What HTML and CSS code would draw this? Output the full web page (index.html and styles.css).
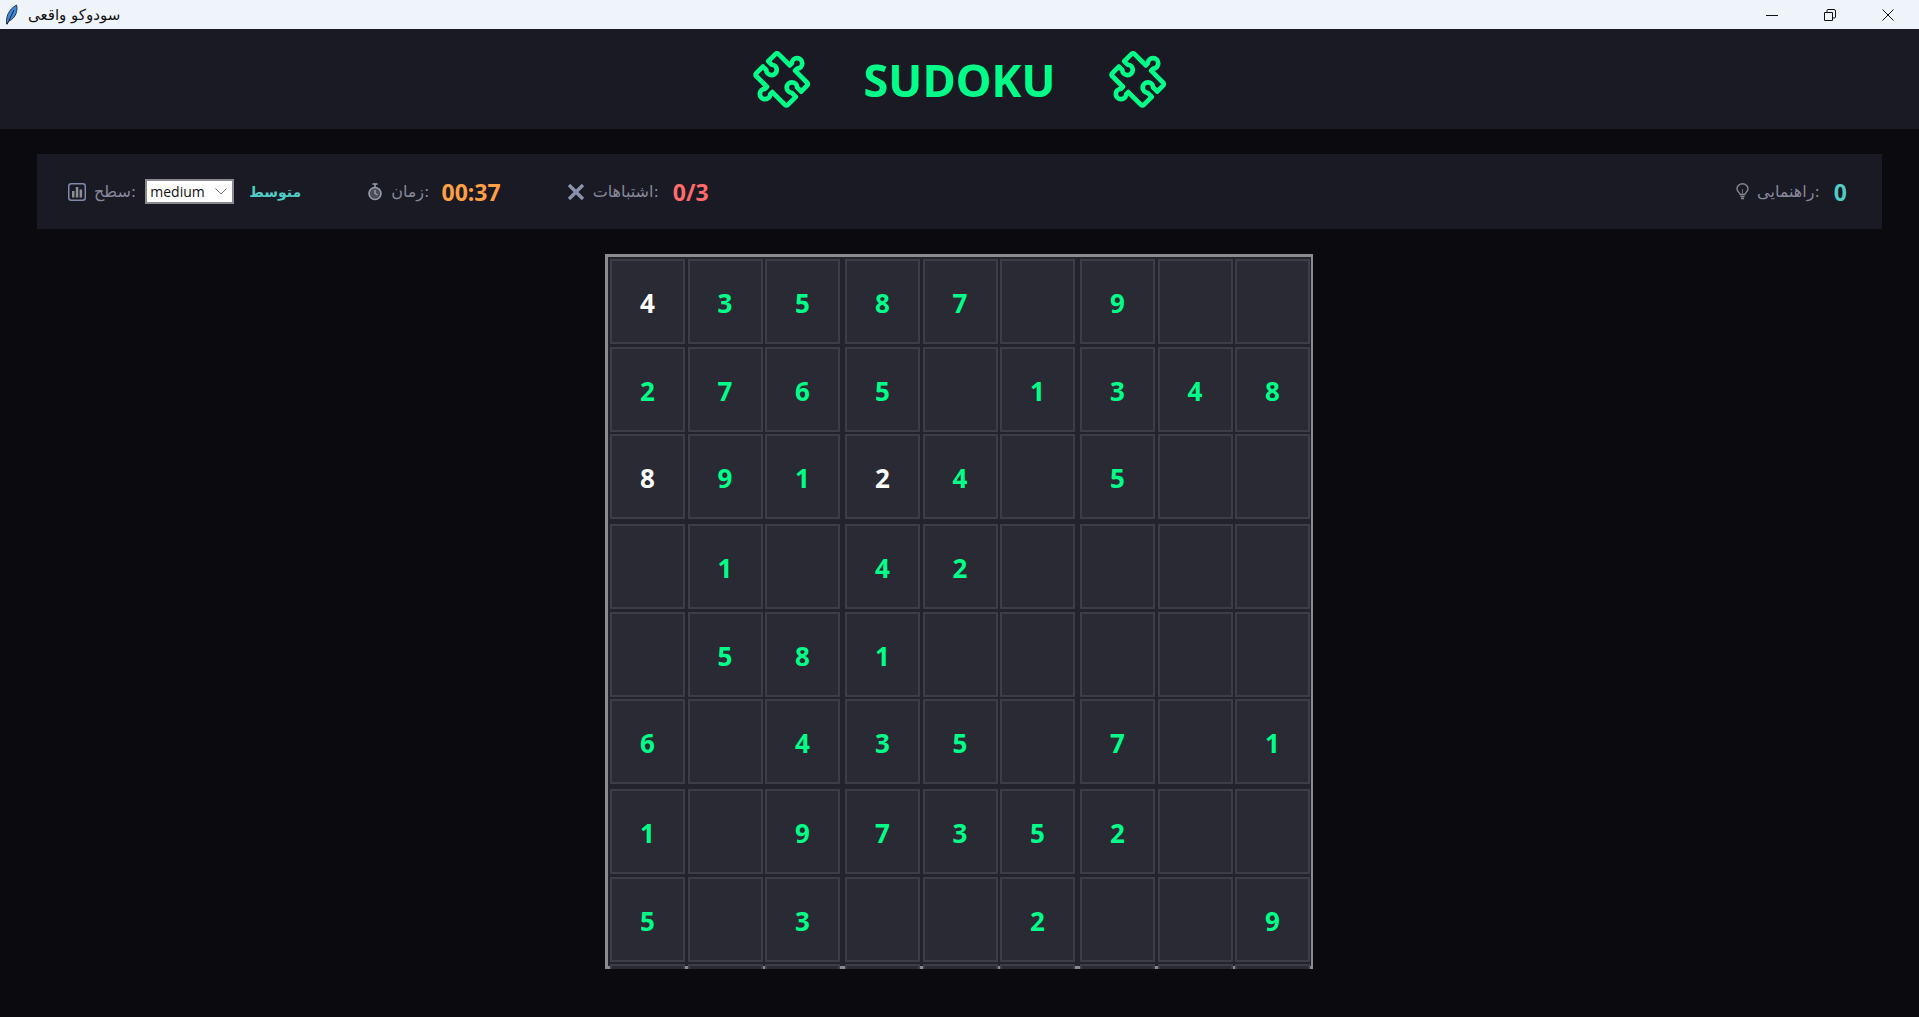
FILE: index.html
```html
<!DOCTYPE html>
<html lang="fa">
<head>
    <meta charset="UTF-8">
    <meta name="viewport" content="width=device-width, initial-scale=1.0">
    <title>سودوکو واقعی</title>
    <link rel="stylesheet" href="styles.css">
</head>
<body>
    <!-- Window title bar -->
    <div class="titlebar">
        <svg class="feather" viewBox="0 0 14 22" width="14" height="22">
            <path d="M1.5 20 C1 13 3 6 11.5 1 C13 6 11 14 4 17 Z" fill="#3f86d8" stroke="#26384f" stroke-width="1"/>
            <path d="M2 20.500 L9 6" stroke="#16263c" stroke-width="1" fill="none"/>
        </svg>
        <span class="window-title">سودوکو واقعی</span>
        <div class="window-controls">
            <svg width="12" height="12" viewBox="0 0 12 12"><path d="M0 6.500 H12" stroke="#111" fill="none"/></svg>
            <svg width="12" height="12" viewBox="0 0 12 12"><path d="M.5 3.500 H8.500 V11.500 H.5 Z M3 3 V1.500 Q3 .5 4 .5 H10 Q11.500 .5 11.500 2 V8 Q11.500 9 10 9 H9" stroke="#111" fill="none"/></svg>
            <svg width="12" height="12" viewBox="0 0 12 12"><path d="M.5 .5 L11.500 11.500 M11.500 .5 L.5 11.500" stroke="#111" fill="none"/></svg>
        </div>
    </div>

    <!-- Header -->
    <header class="app-header">
        <svg class="puzzle" viewBox="0 0 57 57" width="57" height="57">
            <use href="#puzzle-shape"/>
        </svg>
        <h1>SUDOKU</h1>
        <svg class="puzzle" viewBox="0 0 57 57" width="57" height="57">
            <g id="puzzle-shape" transform="translate(24 1.500) rotate(45) scale(.95)">
                <path d="M2 0 H19 V-3 A5.500 5.500 0 1 1 27 -3 V0 H45 A2 2 0 0 1 47 2 V11 H41 A5.500 5.500 0 1 0 41 19 H47 V31 A2 2 0 0 1 45 33 H26 V36 A5.500 5.500 0 1 1 18 36 V33 H2 A2 2 0 0 1 0 31 V21 H5 A5.500 5.500 0 1 0 5 13 H0 V2 A2 2 0 0 1 2 0 Z"/>
            </g>
        </svg>
    </header>

    <main class="content">
        <!-- Stats -->
        <section class="stats">
            <div class="stat">
                <svg class="stat-icon" viewBox="0 0 18 18" width="18" height="18">
                    <rect x=".75" y=".75" width="16.500" height="16.500" rx="2.500" fill="none" stroke="#7f8aa8" stroke-width="1.500"/>
                    <path d="M4 14.500 V8 H6.500 V14.500 Z M7.800 14.500 V4 H10.300 V14.500 Z M11.600 14.500 V6.500 H14.100 V14.500 Z" fill="#8f8f98"/>
                </svg>
                <span class="stat-label">سطح:</span>
                <select class="level-select">
                    <option>medium</option>
                </select>
                <span class="level-name">متوسط</span>
            </div>
            <div class="stat">
                <svg class="stat-icon" viewBox="0 0 16 18" width="16" height="18">
                    <circle cx="8" cy="10.500" r="6" fill="#4a4d5a" stroke="#9a9da8" stroke-width="1.600"/>
                    <path d="M5.500 1 H10.500 M8 1 V4 M8 10.500 V7 M8 10.500 L10.500 12" stroke="#a2a4ad" stroke-width="1.400" fill="none"/>
                </svg>
                <span class="stat-label">زمان:</span>
                <span class="stat-value time">00:37</span>
            </div>
            <div class="stat">
                <svg class="stat-icon" viewBox="0 0 18 18" width="18" height="18">
                    <path d="M2 2 L16 16 M16 2 L2 16" stroke="#8a93ab" stroke-width="3.400" fill="none"/>
                </svg>
                <span class="stat-label">اشتباهات:</span>
                <span class="stat-value errors">0/3</span>
            </div>
            <div class="stat stat-hint">
                <svg class="stat-icon" viewBox="0 0 13 17" width="13" height="17">
                    <path d="M4.200 11.500 C3.500 9.500 1 8.500 1 5.800 A5.500 5 0 0 1 12 5.800 C12 8.500 9.500 9.500 8.800 11.500 Z" fill="none" stroke="#858892" stroke-width="1.400"/>
                    <path d="M4.500 13.500 H8.500 M5 15.500 H8" stroke="#858892" stroke-width="1.500" fill="none"/>
                    <path d="M6.500 11 V6" stroke="#6a6d78" stroke-width="1" fill="none"/>
                </svg>
                <span class="stat-label">راهنمایی:</span>
                <span class="stat-value hints">0</span>
            </div>
        </section>

        <!-- Board -->
        <section class="board">
            <div class="box">
                <div class="cell given">4</div><div class="cell">3</div><div class="cell">5</div>
                <div class="cell">2</div><div class="cell">7</div><div class="cell">6</div>
                <div class="cell given">8</div><div class="cell">9</div><div class="cell">1</div>
            </div>
            <div class="box">
                <div class="cell">8</div><div class="cell">7</div><div class="cell"></div>
                <div class="cell">5</div><div class="cell"></div><div class="cell">1</div>
                <div class="cell given">2</div><div class="cell">4</div><div class="cell"></div>
            </div>
            <div class="box">
                <div class="cell">9</div><div class="cell"></div><div class="cell"></div>
                <div class="cell">3</div><div class="cell">4</div><div class="cell">8</div>
                <div class="cell">5</div><div class="cell"></div><div class="cell"></div>
            </div>
            <div class="box">
                <div class="cell"></div><div class="cell">1</div><div class="cell"></div>
                <div class="cell"></div><div class="cell">5</div><div class="cell">8</div>
                <div class="cell">6</div><div class="cell"></div><div class="cell">4</div>
            </div>
            <div class="box">
                <div class="cell">4</div><div class="cell">2</div><div class="cell"></div>
                <div class="cell">1</div><div class="cell"></div><div class="cell"></div>
                <div class="cell">3</div><div class="cell">5</div><div class="cell"></div>
            </div>
            <div class="box">
                <div class="cell"></div><div class="cell"></div><div class="cell"></div>
                <div class="cell"></div><div class="cell"></div><div class="cell"></div>
                <div class="cell">7</div><div class="cell"></div><div class="cell">1</div>
            </div>
            <div class="box">
                <div class="cell">1</div><div class="cell"></div><div class="cell">9</div>
                <div class="cell">5</div><div class="cell"></div><div class="cell">3</div>
                <div class="cell"></div><div class="cell"></div><div class="cell"></div>
            </div>
            <div class="box">
                <div class="cell">7</div><div class="cell">3</div><div class="cell">5</div>
                <div class="cell"></div><div class="cell"></div><div class="cell">2</div>
                <div class="cell"></div><div class="cell"></div><div class="cell"></div>
            </div>
            <div class="box">
                <div class="cell">2</div><div class="cell"></div><div class="cell"></div>
                <div class="cell"></div><div class="cell"></div><div class="cell">9</div>
                <div class="cell"></div><div class="cell"></div><div class="cell"></div>
            </div>
        </section>
    </main>
</body>
</html>
```
FILE: styles.css
```css
html, body {
    height: 100%;
}
body {
    margin: 0;
    display: flex;
    flex-direction: column;
    overflow: hidden;
    background-color: #0a0a0f;
    font-family: "Open Sans", "DejaVu Sans", sans-serif;
}

/* Window title bar */
.titlebar {
    display: flex;
    align-items: center;
    flex: 0 0 29px;
    padding-left: 5px;
    background-color: #eff4fb;
}
.feather {
    margin-right: 9px;
}
.window-title {
    font-family: "DejaVu Sans", sans-serif;
    font-size: 15px;
    color: #111;
}
.window-controls {
    display: flex;
    gap: 46px;
    margin-left: auto;
    padding-right: 25px;
}

/* Header */
.app-header {
    display: flex;
    align-items: center;
    justify-content: center;
    gap: 54px;
    flex: 0 0 100px;
    background-color: #1a1a25;
}
.app-header h1 {
    margin: 0;
    font-size: 45px;
    font-weight: 700;
    line-height: 1;
    color: #00ff88;
}
.puzzle {
    overflow: visible;
    fill: none;
    stroke: #00ff88;
    stroke-width: 5;
    stroke-linejoin: round;
}

/* Stats */
.content {
    display: flex;
    flex-direction: column;
    align-items: center;
    padding: 25px 37px 0;
}
.stats {
    display: flex;
    align-items: center;
    gap: 66px;
    box-sizing: border-box;
    width: 100%;
    height: 75px;
    padding: 0 35px 0 31px;
    background-color: #1a1a25;
}
.stat {
    display: flex;
    align-items: center;
    gap: 8px;
}
.stat-hint {
    margin-left: auto;
}
.stat-label {
    font-family: "DejaVu Sans", sans-serif;
    font-size: 16px;
    color: #888899;
}
.stat-value {
    margin-left: 6px;
    font-size: 23px;
    font-weight: 700;
}
.time {
    margin-left: 4px;
    color: #ff9f43;
}
.errors {
    color: #ff6b6b;
}
.hints {
    color: #4ecdc4;
}
.level-select {
    appearance: none;
    box-sizing: border-box;
    width: 89px;
    height: 25px;
    margin-left: 1px;
    padding: 0 0 0 3px;
    font-family: "Open Sans", sans-serif;
    font-size: 14px;
    color: #111;
    background: #fff url("data:image/svg+xml,%3Csvg xmlns='http://www.w3.org/2000/svg' width='12' height='7'%3E%3Cpath d='M.5 .5 L6 6 L11.500 .5' fill='none' stroke='%23777'/%3E%3C/svg%3E") right 5px center no-repeat;
    border: 2px solid #8a8a8f;
    border-radius: 0;
}
.level-name {
    margin-left: 7px;
    font-family: "DejaVu Sans", sans-serif;
    font-size: 14px;
    font-weight: 700;
    color: #4ecdc4;
}

/* Board */
.board {
    display: grid;
    grid-template-columns: repeat(3, max-content);
    gap: 5px;
    align-content: start;
    box-sizing: border-box;
    height: 715px;
    margin: 25px 1px 0 0;
    padding: 2px 1px 0 2px;
    overflow: hidden;
    border-top: 3px solid #8a8a8f;
    border-left: 3px solid #8a8a8f;
    border-right: 2px solid #8a8a8f;
    background: linear-gradient(#8a8a8f, #8a8a8f) bottom / 100% 3px no-repeat, #23232b;
}
.box {
    display: grid;
    grid-template-columns: repeat(3, 75px);
    grid-auto-rows: 85px;
    gap: 2.500px;
}
.cell {
    display: flex;
    align-items: center;
    justify-content: center;
    box-sizing: border-box;
    padding-top: 3px;
    font-size: 26px;
    font-weight: 700;
    color: #00ff88;
    background-color: #2a2a35;
    border: 2px solid #3d3d48;
}
.given {
    color: #fff;
}
```
